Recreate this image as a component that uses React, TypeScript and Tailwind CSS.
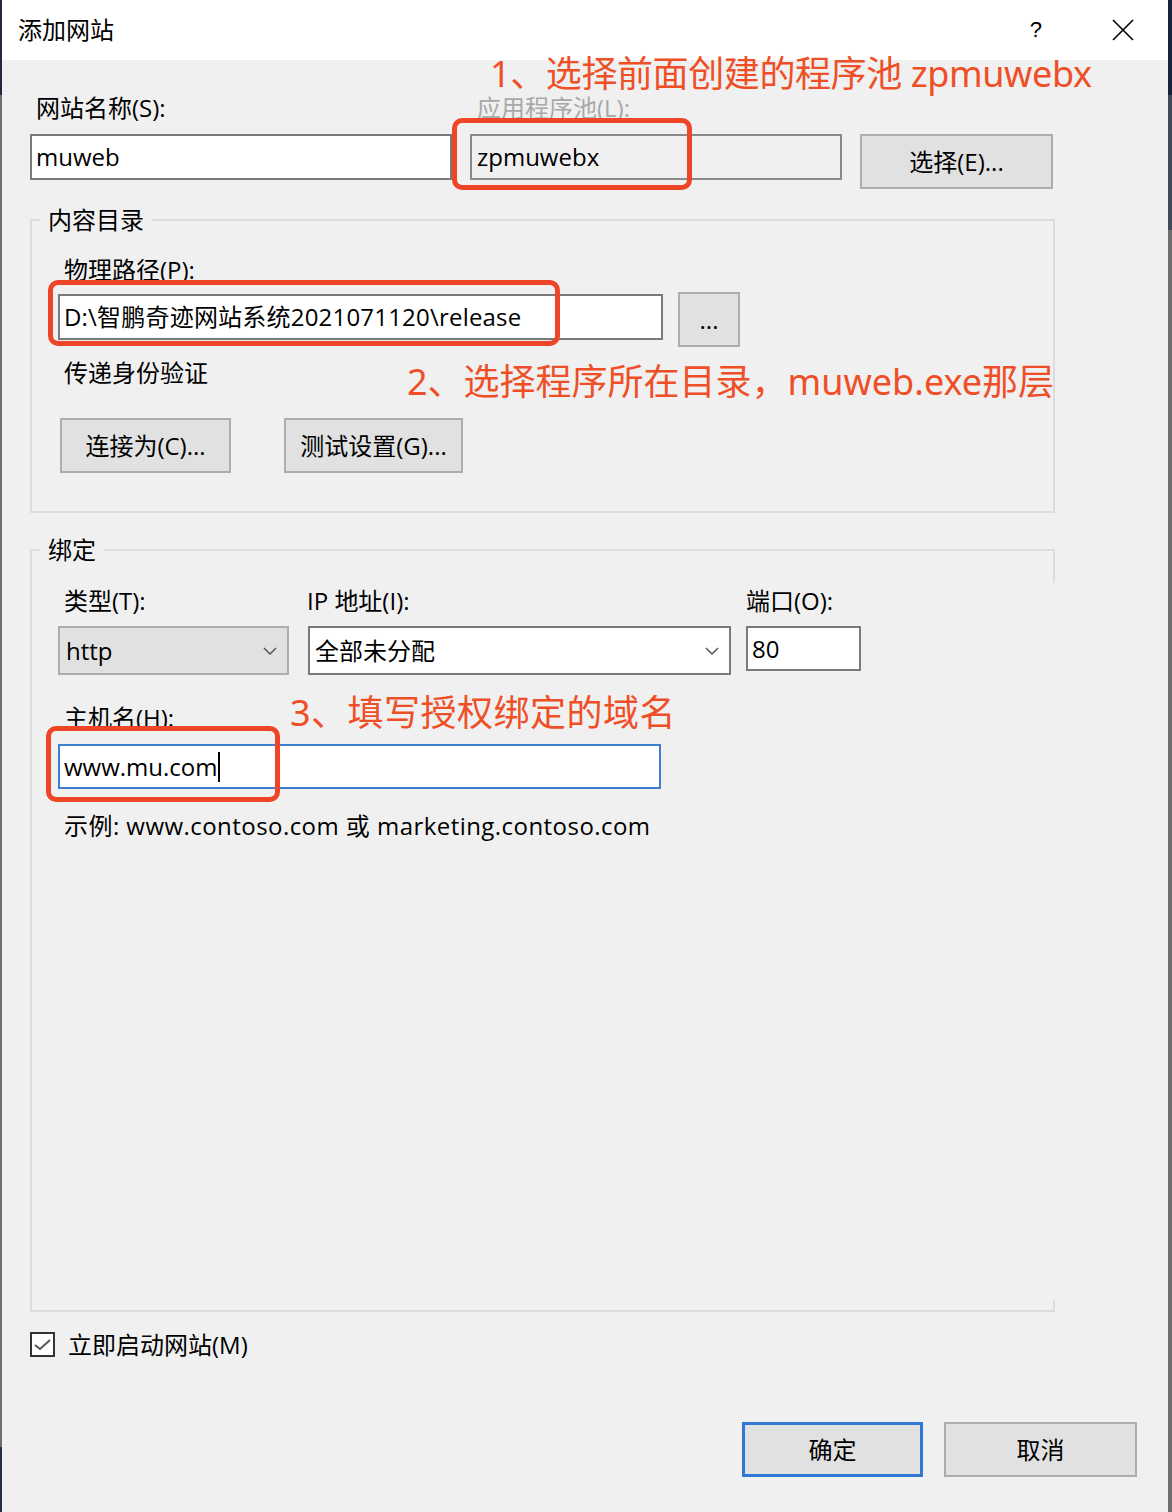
import React from "react";

const Chevron = () => (
  <svg width="14" height="8" viewBox="0 0 14 8" fill="none">
    <polyline points="1,1 7,7 13,1" stroke="#555555" strokeWidth="1.5" />
  </svg>
);

const WinButton = ({ label, className }: { label: string; className: string }) => (
  <div
    className={`flex items-center justify-center bg-[#e1e1e1] border-2 border-[#adadad] ${className}`}
  >
    {label}
  </div>
);

const Legend = ({ text }: { text: string }) => (
  <span className="block w-fit -mt-[13px] ml-[8px] px-[8px] bg-[#f0f0f0] leading-[24px]">
    {text}
  </span>
);

const App: React.FC = () => {
  return (
    <div className="relative w-[1172px] h-[1512px] flex bg-[#f0f0f0] text-black text-[24px] leading-[24px] font-['Open_Sans','Noto_Sans_CJK_SC',sans-serif]">
      {/* left window edge */}
      <div className="w-[2px] flex flex-col">
        <div className="h-[95px] bg-[#202a3a]" />
        <div className="flex-1 bg-[#6e6e6e]" />
        <div className="h-[65px] bg-[#243044]" />
      </div>

      <div className="flex-1 flex flex-col">
        {/* title bar */}
        <div className="h-[60px] bg-white flex items-center pl-[16px]">
          <span className="flex-1">添加网站</span>
          <span className="text-[22px] mr-[70px] font-['Liberation_Sans',sans-serif]">?</span>
          <svg width="22" height="22" viewBox="0 0 22 22" className="mr-[34px]">
            <path d="M1 1 L21 21 M21 1 L1 21" stroke="#000" strokeWidth="1.6" />
          </svg>
        </div>

        {/* dialog body */}
        <div className="flex-1 flex flex-col pl-[28px]">
          <div className="mt-[36px] flex">
            <div className="w-[440px] pl-[6px]">网站名称(S):</div>
            <div className="pl-[7px] text-[#a8a8a8]">应用程序池(L):</div>
          </div>

          <div className="mt-[14px] flex items-start gap-[18px]">
            <div className="w-[422px] h-[46px] border-2 border-[#7a7a7a] bg-white flex items-center pl-[4px]">
              muweb
            </div>
            <div className="w-[372px] h-[46px] border-2 border-[#8a8a8a] bg-[#f0f0f0] flex items-center pl-[5px]">
              zpmuwebx
            </div>
            <WinButton label="选择(E)..." className="w-[193px] h-[55px]" />
          </div>

          {/* 内容目录 */}
          <div className="mt-[30px] w-[1025px] h-[294px] border-2 border-[#dcdcdc]">
            <Legend text="内容目录" />
            <div className="pl-[26px] flex flex-col">
              <div className="mt-[26px] ml-[6px]">物理路径(P):</div>
              <div className="mt-[10px] flex items-start gap-[15px]">
                <div className="mt-[2px] w-[605px] h-[46px] border-2 border-[#7a7a7a] bg-white flex items-center pl-[4px] tracking-[0.2px]">
                  D:\智鹏奇迹网站系统2021071120\release
                </div>
                <WinButton label="..." className="w-[62px] h-[55px]" />
              </div>
              <div className="mt-[14px] ml-[6px]">传递身份验证</div>
              <div className="mt-[33px] ml-[2px] flex gap-[53px]">
                <WinButton label="连接为(C)..." className="w-[171px] h-[55px]" />
                <WinButton label="测试设置(G)..." className="w-[179px] h-[55px]" />
              </div>
            </div>
          </div>

          {/* 绑定 */}
          <div className="mt-[36px] w-[1025px] h-[763px] border-l-2 border-t-2 border-b-2 border-[#dcdcdc] flex">
            <div className="flex-1 flex flex-col">
              <Legend text="绑定" />
              <div className="pl-[26px] flex flex-col">
                <div className="mt-[27px] flex items-start">
                  <div className="w-[231px] flex flex-col">
                    <div className="ml-[6px]">类型(T):</div>
                    <div className="mt-[13px] h-[49px] bg-[#e1e1e1] border-2 border-[#adadad] flex items-center justify-between pl-[6px] pr-[10px]">
                      <span>http</span>
                      <Chevron />
                    </div>
                  </div>
                  <div className="ml-[19px] w-[423px] flex flex-col">
                    <div className="-ml-[1px]">IP 地址(I):</div>
                    <div className="mt-[13px] h-[49px] bg-white border-2 border-[#7a7a7a] flex items-center justify-between pl-[5px] pr-[10px]">
                      <span>全部未分配</span>
                      <Chevron />
                    </div>
                  </div>
                  <div className="ml-[15px] w-[115px] flex flex-col">
                    <div>端口(O):</div>
                    <div className="mt-[13px] h-[45px] bg-white border-2 border-[#7a7a7a] flex items-center pl-[4px]">
                      80
                    </div>
                  </div>
                </div>
                <div className="mt-[31px] ml-[6px]">主机名(H):</div>
                <div className="mt-[14px] w-[603px] h-[45px] border-2 border-[#3c7fd1] bg-white flex items-center pl-[4px]">
                  <span>www.mu.com</span>
                  <span className="w-[2px] h-[30px] bg-black" />
                </div>
                <div className="mt-[25px] ml-[6px] tracking-[0.45px]">
                  示例: www.contoso.com 或 marketing.contoso.com
                </div>
              </div>
            </div>
            {/* right edge of the group box, partly missing in the capture */}
            <div className="w-[2px] flex flex-col">
              <div className="h-[32px] bg-[#dcdcdc]" />
              <div className="flex-1" />
              <div className="h-[10px] bg-[#dcdcdc]" />
            </div>
          </div>

          <div className="mt-[20px] flex items-center gap-[13px]">
            <div className="w-[25px] h-[25px] border-2 border-[#333333] bg-white flex items-center justify-center">
              <svg width="17" height="13" viewBox="0 0 17 13" fill="none">
                <polyline points="1,7 6,11 16,2" stroke="#555555" strokeWidth="2" />
              </svg>
            </div>
            <span>立即启动网站(M)</span>
          </div>

          <div className="mt-[65px] flex justify-end gap-[21px] pr-[31px]">
            <div className="w-[181px] h-[55px] flex items-center justify-center bg-[#e1e1e1] border-[3px] border-[#2f78d4]">
              确定
            </div>
            <WinButton label="取消" className="w-[193px] h-[55px]" />
          </div>
        </div>
      </div>

      {/* right window edge */}
      <div className="w-[4px] flex flex-col">
        <div className="h-[95px] bg-[#15243a]" />
        <div className="h-[135px] bg-[#404a57]" />
        <div className="flex-1 bg-[#6e6e6e]" />
      </div>

      {/* red annotations drawn over the dialog */}
      <div className="absolute left-[452px] top-[118px] w-[240px] h-[72px] border-[5px] border-[#ee4527] rounded-[10px]" />
      <div className="absolute left-[48px] top-[280px] w-[512px] h-[66px] border-[5px] border-[#ee4527] rounded-[10px]" />
      <div className="absolute left-[46px] top-[726px] w-[234px] h-[76px] border-[5px] border-[#ee4527] rounded-[10px]" />
      <div className="absolute left-[490px] top-[54px] text-[36px] leading-[40px] tracking-[-0.4px] text-[#ef4f27] whitespace-nowrap font-['Noto_Sans','Noto_Sans_CJK_SC',sans-serif]">
        1、选择前面创建的程序池 zpmuwebx
      </div>
      <div className="absolute left-[407px] top-[362px] text-[36px] leading-[40px] text-[#ef4f27] whitespace-nowrap font-['Noto_Sans','Noto_Sans_CJK_SC',sans-serif]">
        2、选择程序所在目录，muweb.exe那层
      </div>
      <div className="absolute left-[290px] top-[693px] text-[36px] leading-[40px] tracking-[0.5px] text-[#ef4f27] whitespace-nowrap font-['Noto_Sans','Noto_Sans_CJK_SC',sans-serif]">
        3、填写授权绑定的域名
      </div>
    </div>
  );
};

export default App;
